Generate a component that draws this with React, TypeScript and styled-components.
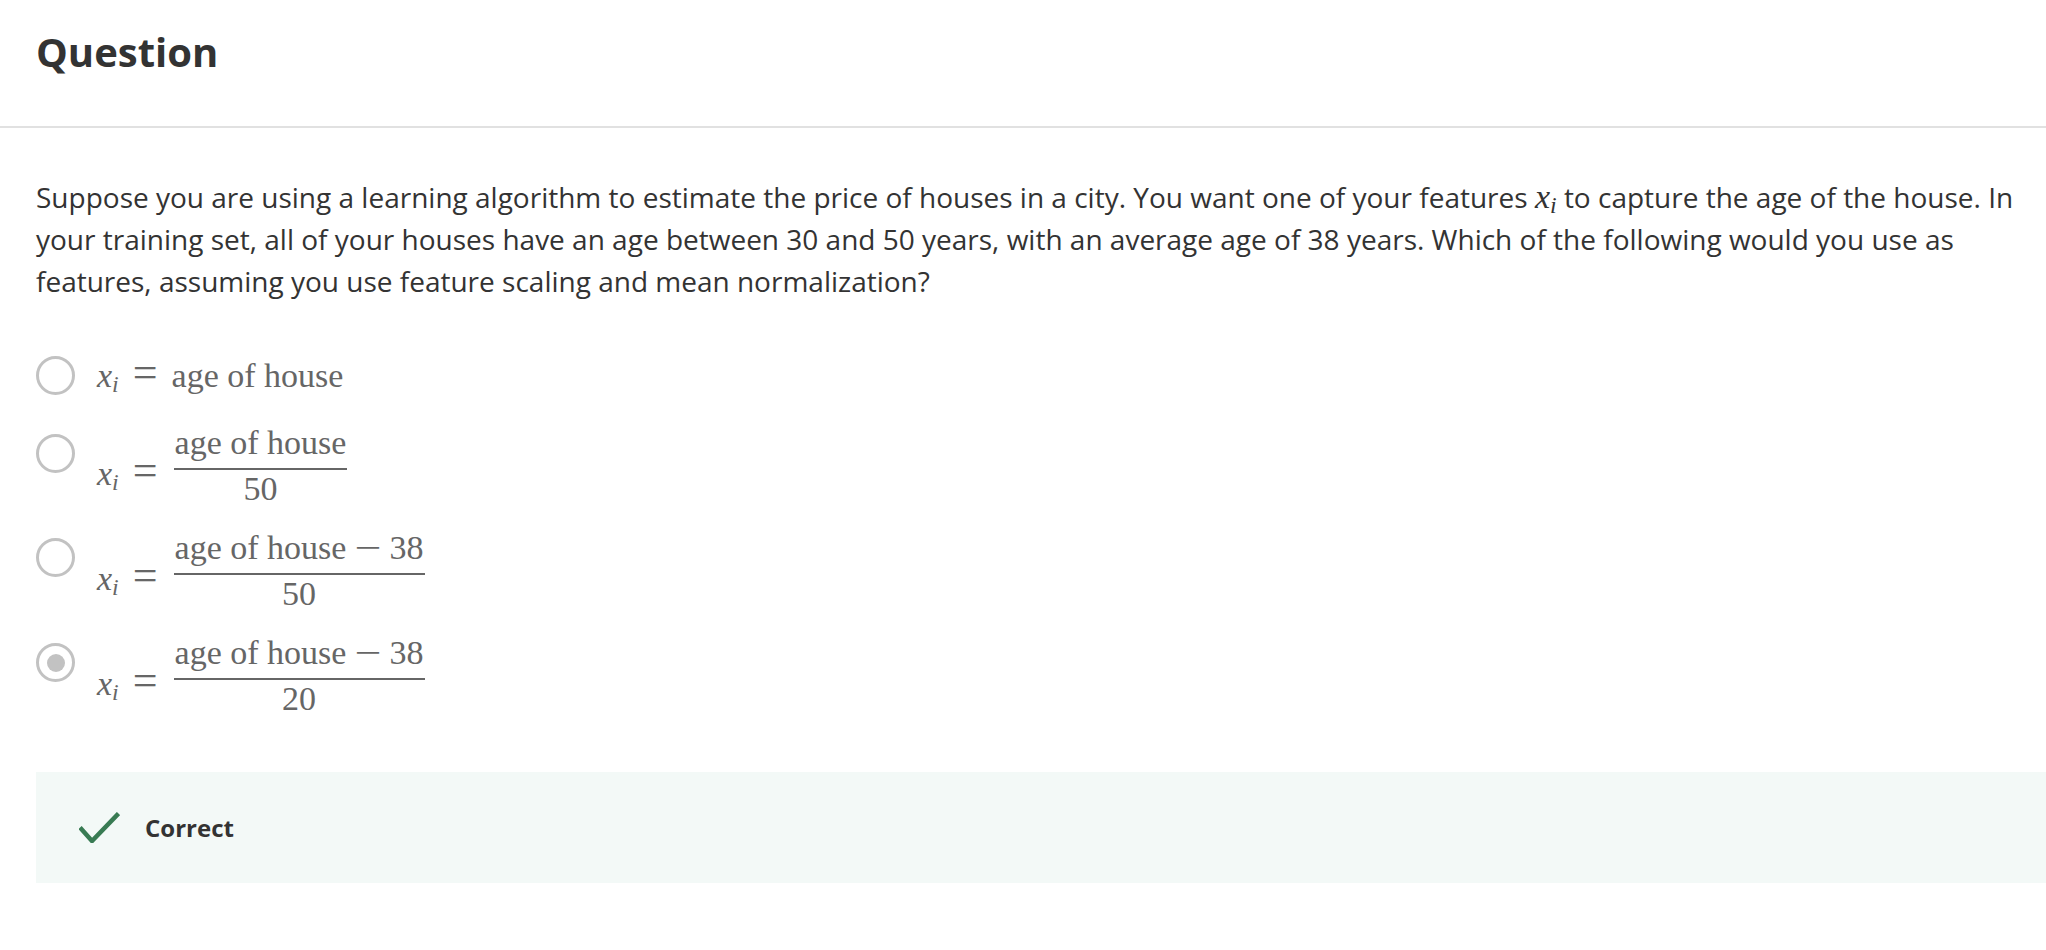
import React from "react";
import styled, { createGlobalStyle } from "styled-components";

const Global = createGlobalStyle`
  html, body { margin: 0; padding: 0; background: #ffffff; }
  body {
    font-family: "Open Sans", "Noto Sans", sans-serif;
    color: #333333;
    overflow: hidden;
  }
`;

const Page = styled.div`
  width: 100%;
`;

const Header = styled.header`
  height: 128px;
  box-sizing: border-box;
  padding: 26px 36px 0;
  border-bottom: 2px solid #e1e1e1;
`;

const Title = styled.h1`
  margin: 0;
  font-size: 40px;
  line-height: 52px;
  font-weight: 700;
  color: #333333;
`;

const Body = styled.main`
  display: flex;
  flex-direction: column;
  padding: 48px 0 60px 36px;
`;

const Prompt = styled.p`
  margin: 0;
  font-size: 28px;
  line-height: 42px;
  color: #333333;
`;

const InlineMath = styled.span`
  display: inline-block;
  font-family: "Liberation Serif", "Times New Roman", serif;
  font-size: 34px;
  line-height: 34px;
  color: #333333;
  vertical-align: baseline;
`;

const Var = styled.i`
  font-style: italic;
`;

const Sub = styled.span`
  font-size: 0.7em;
  font-style: italic;
  position: relative;
  top: 0.2em;
`;

const Options = styled.div`
  display: flex;
  flex-direction: column;
  gap: 24px;
  margin-top: 54px;
`;

const Row = styled.label<{ $frac?: boolean }>`
  display: flex;
  align-items: flex-start;
  gap: 22px;
  min-height: ${(p) => (p.$frac ? "81px" : "46px")};
  cursor: pointer;
`;

const Radio = styled.span<{ $checked?: boolean; $offset: number }>`
  margin-top: ${(p) => p.$offset}px;
  width: 39px;
  height: 39px;
  box-sizing: border-box;
  border: 3.5px solid #c2c2c2;
  border-radius: 50%;
  display: flex;
  align-items: center;
  justify-content: center;
  flex-shrink: 0;
  &::after {
    content: "";
    width: 18px;
    height: 18px;
    border-radius: 50%;
    background: #c2c2c2;
    display: ${(p) => (p.$checked ? "block" : "none")};
  }
`;

const Math = styled.span`
  display: flex;
  align-items: flex-start;
  font-family: "Liberation Serif", "Times New Roman", serif;
  font-size: 34px;
  line-height: 34px;
  color: #666666;
  white-space: nowrap;
`;

const Lhs = styled.span<{ $top: number }>`
  margin-top: ${(p) => p.$top}px;
  display: inline-flex;
  align-items: baseline;
`;

const Eq = styled.span`
  font-size: 44px;
  line-height: 34px;
  margin: 0 14px 0 14px;
`;

const Frac = styled.span`
  display: inline-flex;
  flex-direction: column;
  align-items: center;
  margin-left: 2px;
`;

const Num = styled.span`
  align-self: stretch;
  height: 34px;
  text-align: center;
  padding: 0 1px 8px;
  border-bottom: 2px solid #666666;
`;

const Den = styled.span`
  padding-top: 2px;
`;

const Minus = styled.span`
  display: inline-block;
  margin: 0 12px;
  transform: scaleX(1.4);
`;

const Feedback = styled.div`
  margin-top: 55px;
  height: 111px;
  box-sizing: border-box;
  display: flex;
  align-items: center;
  gap: 25px;
  padding-left: 43px;
  background: #f3f9f7;
`;

const FeedbackText = styled.span`
  font-size: 24px;
  font-weight: 700;
  color: #333333;
`;

const X = () => (
  <>
    <Var>x</Var>
    <Sub>i</Sub>
  </>
);

type Opt = {
  num: React.ReactNode;
  den?: string;
  checked?: boolean;
  radioOffset: number;
};

const options: Opt[] = [
  { num: "age of house", radioOffset: 0 },
  { num: "age of house", den: "50", radioOffset: 8 },
  {
    num: (
      <>
        age of house<Minus>−</Minus>38
      </>
    ),
    den: "50",
    radioOffset: 7,
  },
  {
    num: (
      <>
        age of house<Minus>−</Minus>38
      </>
    ),
    den: "20",
    checked: true,
    radioOffset: 7,
  },
];

const CheckIcon = () => (
  <svg width="41" height="31" viewBox="0 0 41 31" fill="none">
    <polyline
      points="1,15.5 13,29 39.5,1.5"
      stroke="#387b53"
      strokeWidth="4.5"
      strokeLinejoin="miter"
    />
  </svg>
);

export default function App() {
  return (
    <Page>
      <Global />
      <Header>
        <Title>Question</Title>
      </Header>
      <Body>
        <Prompt>
          Suppose you are using a learning algorithm to estimate the price of houses in a city. You
          want one of your features{" "}
          <InlineMath>
            <X />
          </InlineMath>{" "}
          to capture the age of the house. In your training set, all of your houses have an age
          between 30 and 50 years, with an average age of 38 years. Which of the following would
          you use as features, assuming you use feature scaling and mean normalization?
        </Prompt>
        <Options>
          {options.map((o, i) => (
            <Row key={i} $frac={!!o.den}>
              <Radio $checked={o.checked} $offset={o.radioOffset} />
              <Math>
                <Lhs $top={o.den ? 28 : 0}>
                  <X />
                  <Eq>=</Eq>
                  {!o.den && <span>{o.num}</span>}
                </Lhs>
                {o.den && (
                  <Frac>
                    <Num>{o.num}</Num>
                    <Den>{o.den}</Den>
                  </Frac>
                )}
              </Math>
            </Row>
          ))}
        </Options>
        <Feedback>
          <CheckIcon />
          <FeedbackText>Correct</FeedbackText>
        </Feedback>
      </Body>
    </Page>
  );
}
